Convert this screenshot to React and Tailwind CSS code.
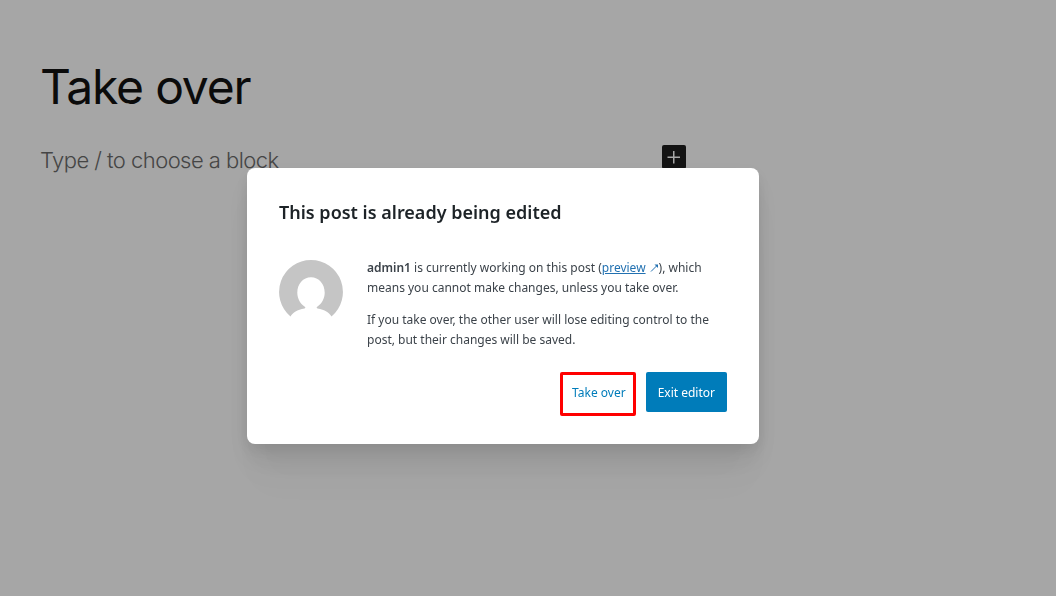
import { useState } from 'react';

const Avatar = () => (
  <svg viewBox="0 0 64 64" className="mt-1 size-16 shrink-0" aria-hidden="true">
    <path
      fill="#c5c5c5"
      d="M32 0a32 32 0 0 1 20.500 56.500C50 52.500 46 49.700 38.500 48.500C37.500 48 37.300 47.300 38.200 46.700C42.500 44 45.700 38.800 45.700 32.800C45.700 24 39.900 17.300 32 17.300S18.300 24 18.300 32.800C18.300 38.800 21.500 44 25.800 46.700C26.700 47.300 26.500 48 25.500 48.500C18 49.700 14 52.500 11.500 56.500A32 32 0 0 1 32 0Z"
    />
  </svg>
);

const EditorCanvas = () => (
  <main className="max-w-[726px] px-10 pt-[55px] font-['Inter',sans-serif]">
    <h1 className="text-5xl leading-16 font-normal tracking-tight text-[#111111]">Take over</h1>
    <div className="mt-[25px] flex items-start justify-between">
      <p className="text-[22px] leading-8 font-light tracking-tight text-[#6b6b6b]">Type / to choose a block</p>
      <button
        type="button"
        aria-label="Add block"
        className="mt-px flex size-6 items-center justify-center rounded-xs bg-[#1e1e1e] text-white"
      >
        <svg viewBox="0 0 24 24" className="size-6" fill="currentColor" aria-hidden="true">
          <path d="M11 6h1.500v5.500H18V13h-5.500v5.500H11V13H5.500v-1.500H11z" />
        </svg>
      </button>
    </div>
  </main>
);

const PostLockedModal = ({ onTakeOver }) => (
  <div
    role="dialog"
    aria-modal="true"
    aria-labelledby="post-locked-title"
    className="w-full max-w-lg rounded-lg bg-white px-8 pb-8 text-xs leading-5 text-[#3c434a] shadow-[0_5px_15px_#00000014,0_15px_27px_#00000012,0_30px_36px_#0000000a,0_50px_43px_#00000005]"
  >
    {/* Header */}
    <div className="flex h-[72px] items-center pt-4">
      <h2 id="post-locked-title" className="text-lg font-semibold text-[#1d2327]">
        This post is already being edited
      </h2>
    </div>

    {/* Content */}
    <div className="flex gap-6 pt-4">
      <Avatar />
      <div className="min-w-0 flex-1 pt-0.5">
        <p>
          <strong className="font-semibold">admin1</strong> is currently working on this post (
          <a href="#preview" className="text-[#2271b1]">
            <span className="underline">preview</span>
            <svg viewBox="0 0 9 9" className="ml-1 inline size-[9px] align-baseline" fill="none" stroke="currentColor" aria-hidden="true">
              <path d="M1 8.500L7 2.500" />
              <path d="M4.500 1.500H8V5z" fill="currentColor" stroke="none" />
            </svg>
          </a>
          ), which means you cannot make changes, unless you take over.
        </p>
        <p className="mt-3">
          If you take over, the other user will lose editing control to the post, but their changes will be saved.
        </p>
      </div>
    </div>

    {/* Actions */}
    <div className="mt-[22px] flex justify-end gap-2">
      <div className="relative">
        <button type="button" onClick={onTakeOver} className="h-10 rounded-xs px-3 pt-0.5 text-[#007cba]">
          Take over
        </button>
        <span className="pointer-events-none absolute right-0.5 -bottom-1 left-0 top-0 rounded-xs border-3 border-[#ff0000]" />
      </div>
      <button type="button" className="h-10 rounded-xs bg-[#007cba] px-3 pt-0.5 text-white">
        Exit editor
      </button>
    </div>
  </div>
);

const App = () => {
  const [locked, setLocked] = useState(true);

  return (
    <div className="min-h-screen bg-white">
      <EditorCanvas />
      {locked && (
        <div className="fixed inset-0 flex items-center justify-center bg-black/35 pt-4 pr-[50px] font-['Noto_Sans',sans-serif]">
          <PostLockedModal onTakeOver={() => setLocked(false)} />
        </div>
      )}
    </div>
  );
};

export default App;
